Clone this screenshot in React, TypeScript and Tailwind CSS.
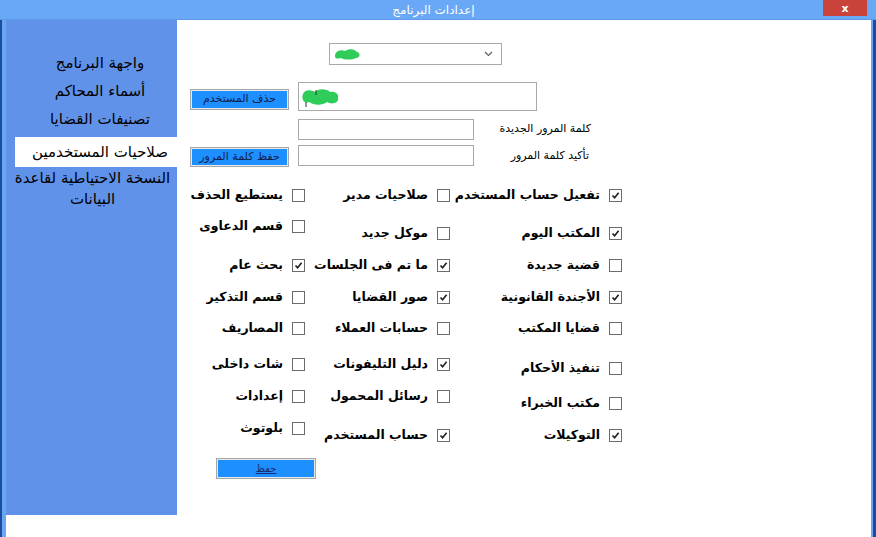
import React from 'react';

type Perm = { label: string; checked: boolean; mt: string };

const col1: Perm[] = [
  { label: 'تفعيل حساب المستخدم', checked: true, mt: 'mt-0' },
  { label: 'المكتب اليوم', checked: true, mt: 'mt-[18px]' },
  { label: 'قضية جديدة', checked: false, mt: 'mt-[12px]' },
  { label: 'الأجندة القانونية', checked: true, mt: 'mt-[12px]' },
  { label: 'قضايا المكتب', checked: false, mt: 'mt-[11px]' },
  { label: 'تنفيذ الأحكام', checked: false, mt: 'mt-[20px]' },
  { label: 'مكتب الخبراء', checked: false, mt: 'mt-[15px]' },
  { label: 'التوكيلات', checked: true, mt: 'mt-[12px]' },
];

const col2: Perm[] = [
  { label: 'صلاحيات مدير', checked: false, mt: 'mt-0' },
  { label: 'موكل جديد', checked: false, mt: 'mt-[18px]' },
  { label: 'ما تم فى الجلسات', checked: true, mt: 'mt-[12px]' },
  { label: 'صور القضايا', checked: true, mt: 'mt-[12px]' },
  { label: 'حسابات العملاء', checked: false, mt: 'mt-[11px]' },
  { label: 'دليل التليفونات', checked: true, mt: 'mt-[16px]' },
  { label: 'رسائل المحمول', checked: false, mt: 'mt-[12px]' },
  { label: 'حساب المستخدم', checked: true, mt: 'mt-[19px]' },
];

const col3: Perm[] = [
  { label: 'يستطيع الحذف', checked: false, mt: 'mt-0' },
  { label: 'قسم الدعاوى', checked: false, mt: 'mt-[11px]' },
  { label: 'بحث عام', checked: true, mt: 'mt-[19px]' },
  { label: 'قسم التذكير', checked: false, mt: 'mt-[12px]' },
  { label: 'المصاريف', checked: false, mt: 'mt-[11px]' },
  { label: 'شات داخلى', checked: false, mt: 'mt-[16px]' },
  { label: 'إعدادات', checked: false, mt: 'mt-[12px]' },
  { label: 'بلوتوث', checked: false, mt: 'mt-[12px]' },
];

const arabic = "font-['DejaVu_Sans',sans-serif]";

const CheckBox: React.FC<{ checked: boolean }> = ({ checked }) => (
  <span className="w-[13px] h-[13px] shrink-0 border border-[#6b6b6b] bg-white flex items-center justify-center">
    {checked && (
      <svg width="9" height="9" viewBox="0 0 9 9">
        <path d="M1.5 4.5 L3.6 6.8 L7.6 1.8" fill="none" stroke="#1f1f1f" strokeWidth="1.6" />
      </svg>
    )}
  </span>
);

const PermColumn: React.FC<{ items: Perm[]; width: string }> = ({ items, width }) => (
  <div className={`${width} flex flex-col items-end`}>
    {items.map((p, i) => (
      <div key={i} className={`${p.mt} h-5 flex items-center justify-end gap-[9px] whitespace-nowrap`}>
        <span dir="rtl" className="text-[12.5px] font-bold text-black">{p.label}</span>
        <CheckBox checked={p.checked} />
      </div>
    ))}
  </div>
);

const BlueButton: React.FC<{ label: string; className?: string }> = ({ label, className }) => (
  <div className={`border border-[#a6a6a6] bg-[#e8e8e8] p-px ${className ?? ''}`}>
    <div className="h-full bg-[#1e8fff] flex items-center justify-center text-[11px] text-[#10204a]" dir="rtl">
      {label}
    </div>
  </div>
);

const GreenBlob: React.FC<{ big?: boolean }> = ({ big }) =>
  big ? (
    <svg width="40" height="22" viewBox="0 0 40 22">
      <path d="M3 8 C5 3 12 4 15 6 C19 2 27 3 30 6 C35 5 39 8 38 12 C39 17 32 19 27 16 C22 20 13 19 9 16 C4 18 1 13 3 8 Z" fill="#2fcc5a" />
      <path d="M6 16 L6 21 M16 4 L16 9" stroke="#1d3b22" strokeWidth="1" />
    </svg>
  ) : (
    <svg width="28" height="14" viewBox="0 0 28 14">
      <path d="M2 9 C2 4 8 2 12 4 C16 1 22 2 24 5 C28 6 27 11 23 11 C19 13 12 13 8 11 C5 12 2 12 2 9 Z" fill="#2fcc5a" />
    </svg>
  );

const App: React.FC = () => {
  return (
    <div className={`w-[876px] h-[537px] flex flex-col overflow-hidden bg-white ${arabic}`}>
      {/* title bar */}
      <div className="h-[20px] shrink-0 bg-[#68a8f6] flex items-start border-b border-[#5f9ae6]">
        <div className="flex-1" />
        <div className="h-[19px] flex items-center text-[12px] text-white" dir="rtl">
          إعدادات البرنامج
        </div>
        <div className="flex-1 flex justify-end pr-[9px]">
          <div className="w-[44px] h-[16px] bg-[#c9433b] flex items-center justify-center text-white text-[11px] font-bold leading-none">
            x
          </div>
        </div>
      </div>

      <div className="flex-1 flex">
        <div className="w-[2px] bg-[#1d4c9f]" />
        <div className="w-[4px] bg-[#6aa7f2]" />

        {/* sidebar */}
        <div className="w-[171px] flex flex-col">
          <div className="h-[495px] bg-[#6192ea] pt-[29px] pl-[9px] flex flex-col text-[15px] text-black whitespace-nowrap">
            <div className="h-7 flex items-center justify-center pl-[8px]" dir="rtl">واجهة البرنامج</div>
            <div className="h-7 flex items-center justify-center pl-[8px]" dir="rtl">أسماء المحاكم</div>
            <div className="h-7 flex items-center justify-center pl-[8px]" dir="rtl">تصنيفات القضايا</div>
            <div className="mt-[4px] h-[30px] bg-white flex items-center justify-center pl-[8px]" dir="rtl">
              صلاحيات المستخدمين
            </div>
            <div className="pt-[1px] leading-[21px] flex flex-col items-center -ml-[9px] pl-[2px]" dir="rtl">
              <span>النسخة الاحتياطية لقاعدة</span>
              <span>البيانات</span>
            </div>
          </div>
        </div>

        {/* content */}
        <div className="flex-1 flex flex-col bg-white">
          <div className="mt-[23px] ml-[152px] w-[173px] h-[22px] border border-[#a9a9a9] flex items-center px-[3px]">
            <GreenBlob />
            <div className="flex-1" />
            <svg width="9" height="6" viewBox="0 0 9 6" className="mr-[5px]">
              <path d="M1 1 L4.5 4.5 L8 1" fill="none" stroke="#606060" strokeWidth="1.2" />
            </svg>
          </div>

          <div className="mt-[17px] flex items-end">
            <BlueButton label="حذف المستخدم" className="ml-[13px] w-[99px] h-[21px] mb-px" />
            <div className="ml-[9px] w-[239px] h-[29px] border border-[#a9a9a9] flex items-center pl-[1px]">
              <GreenBlob big />
            </div>
          </div>

          <div className="mt-[8px] flex items-center">
            <div className="ml-[121px] w-[176px] h-[21px] border border-[#a9a9a9]" />
            <div className="ml-[7px] w-[110px] text-right text-[11px] text-black" dir="rtl">كلمة المرور الجديدة</div>
          </div>

          <div className="mt-[5px] flex items-center h-[22px]">
            <BlueButton label="حفظ كلمة المرور" className="ml-[13px] w-[99px] h-[20px] self-end" />
            <div className="ml-[9px] w-[176px] h-[21px] border border-[#a9a9a9] self-start" />
            <div className="ml-[7px] w-[108px] text-right text-[11px] text-black" dir="rtl">تأكيد كلمة المرور</div>
          </div>

          <div className="mt-[18px] flex">
            <PermColumn items={col3} width="w-[128px]" />
            <PermColumn items={col2} width="w-[145px]" />
            <PermColumn items={col1} width="w-[172px]" />
          </div>

          <div className="mt-[13px] ml-[39px] w-[100px] h-[21px] border border-[#a6a6a6] bg-[#e8e8e8] p-px">
            <div className="h-full bg-[#1e8fff] flex items-center justify-center text-[10px] text-[#1a2c6e] underline" dir="rtl">
              حفظ
            </div>
          </div>
        </div>

        <div className="w-[2px] bg-[#6aa7f2]" />
        <div className="w-[3px] bg-[#1d4c9f]" />
      </div>
    </div>
  );
};

export default App;
